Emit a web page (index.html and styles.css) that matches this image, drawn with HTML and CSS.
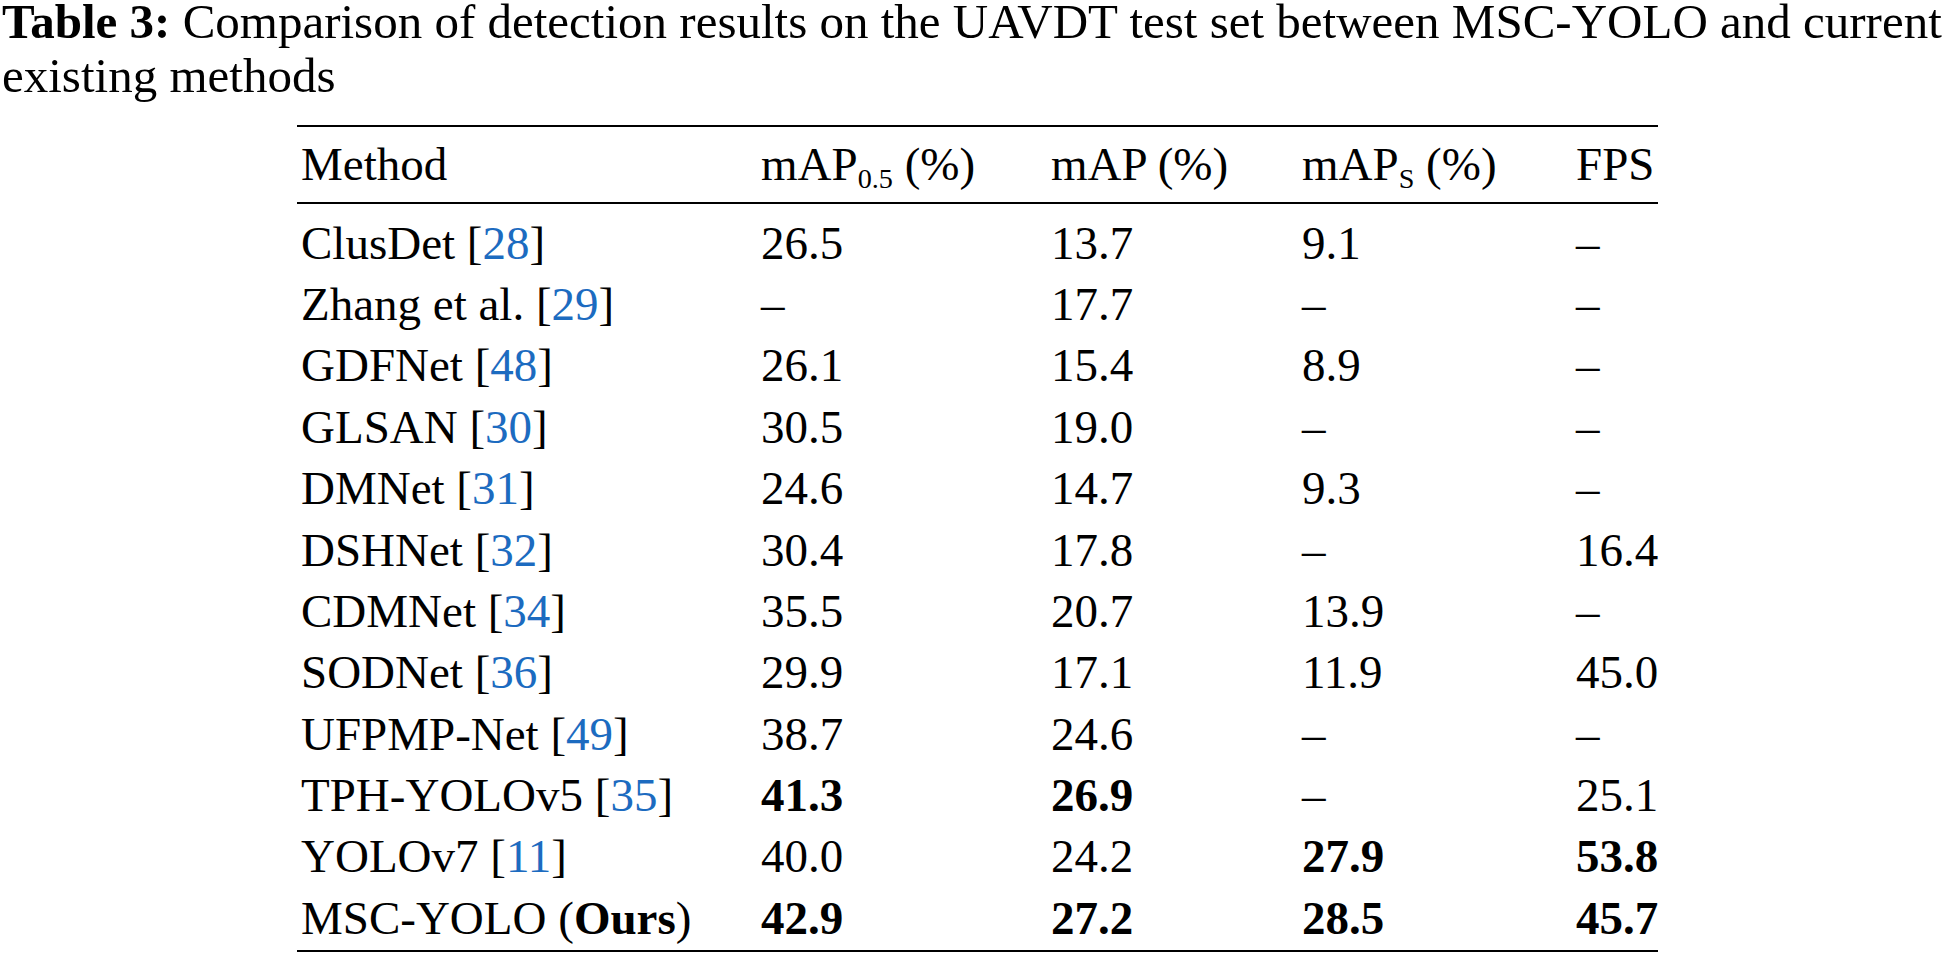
FILE: index.html
```html
<!DOCTYPE html>
<html>
<head>
<meta charset="utf-8">
<link rel="stylesheet" href="styles.css">
</head>
<body>
<div class="page">
  <p class="caption"><b>Table 3:</b> Comparison of detection results on the UAVDT test set between MSC-YOLO and current existing methods</p>
  <table class="results">
    <thead>
      <tr class="pad-top"><td colspan="5"></td></tr>
      <tr>
        <th class="c1">Method</th>
        <th class="c2">mAP<sub>0.5</sub> (%)</th>
        <th class="c3">mAP (%)</th>
        <th class="c4">mAP<sub>S</sub> (%)</th>
        <th class="c5">FPS</th>
      </tr>
      <tr class="pad-bot"><td colspan="5"></td></tr>
    </thead>
    <tbody>
      <tr class="pad-top"><td colspan="5"></td></tr>
      <tr><td>ClusDet [<a>28</a>]</td><td>26.5</td><td>13.7</td><td>9.1</td><td>–</td></tr>
      <tr><td>Zhang et al. [<a>29</a>]</td><td>–</td><td>17.7</td><td>–</td><td>–</td></tr>
      <tr><td>GDFNet [<a>48</a>]</td><td>26.1</td><td>15.4</td><td>8.9</td><td>–</td></tr>
      <tr><td>GLSAN [<a>30</a>]</td><td>30.5</td><td>19.0</td><td>–</td><td>–</td></tr>
      <tr><td>DMNet [<a>31</a>]</td><td>24.6</td><td>14.7</td><td>9.3</td><td>–</td></tr>
      <tr><td>DSHNet [<a>32</a>]</td><td>30.4</td><td>17.8</td><td>–</td><td>16.4</td></tr>
      <tr><td>CDMNet [<a>34</a>]</td><td>35.5</td><td>20.7</td><td>13.9</td><td>–</td></tr>
      <tr><td>SODNet [<a>36</a>]</td><td>29.9</td><td>17.1</td><td>11.9</td><td>45.0</td></tr>
      <tr><td>UFPMP-Net [<a>49</a>]</td><td>38.7</td><td>24.6</td><td>–</td><td>–</td></tr>
      <tr><td>TPH-YOLOv5 [<a>35</a>]</td><td><b>41.3</b></td><td><b>26.9</b></td><td>–</td><td>25.1</td></tr>
      <tr><td>YOLOv7 [<a>11</a>]</td><td>40.0</td><td>24.2</td><td><b>27.9</b></td><td><b>53.8</b></td></tr>
      <tr><td>MSC-YOLO (<b>Ours</b>)</td><td><b>42.9</b></td><td><b>27.2</b></td><td><b>28.5</b></td><td><b>45.7</b></td></tr>
    </tbody>
  </table>
</div>
</body>
</html>
```
FILE: styles.css
```css
html, body {
  margin: 0;
  padding: 0;
  background: #ffffff;
}
body {
  font-family: "Liberation Serif", "Times New Roman", serif;
  color: #000000;
}
.page {
  width: 1954px;
  height: 954px;
  overflow: hidden;
}
.caption {
  margin: -5px 0 0 2px;
  font-size: 49px;
  line-height: 54px;
}
.caption b {
  font-weight: bold;
}
.results {
  margin: 22px 0 0 297px;
  border-collapse: collapse;
  font-size: 47px;
  border-top: 2px solid #000;
  border-bottom: 2px solid #000;
}
.results th, .results td {
  font-weight: normal;
  text-align: left;
  padding: 0 0 0 4px;
  height: 61.4px;
  line-height: 61px;
  white-space: nowrap;
  vertical-align: middle;
}
.results .pad-top td, .results .pad-bot td {
  height: 7px;
  line-height: 7px;
  padding: 0;
}
.results tbody tr.pad-top td {
  height: 8px;
  line-height: 8px;
}
.results thead tr.pad-bot td {
  border-bottom: 2px solid #000;
}
.results tbody tr:last-child td {
  height: 62.4px;
}
.results .c1 { width: 456px; }
.results .c2 { width: 286px; }
.results .c3 { width: 247px; }
.results .c4 { width: 270px; }
.results .c5 { width: 81px; }
.results sub {
  font-size: 0.6em;
  vertical-align: -0.3em;
  line-height: 0;
}
.results a {
  color: #1c6bc0;
  text-decoration: none;
}
.results b {
  font-weight: bold;
}
```
